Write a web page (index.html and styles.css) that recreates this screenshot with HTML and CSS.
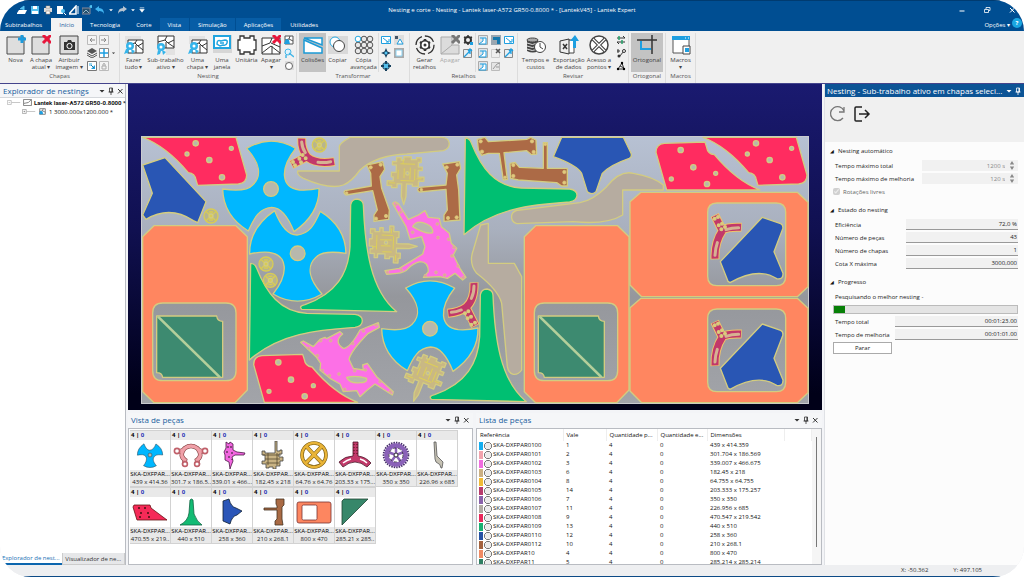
FILE: index.html
```html
<!DOCTYPE html>
<html lang="pt">
<head>
<meta charset="utf-8">
<title>Nesting e corte - Lantek Expert</title>
<link rel="stylesheet" href="styles.css">
</head>
<body>
<svg class="defs" aria-hidden="true">
  <defs>
    <linearGradient id="steel" x1="0" y1="0" x2="0" y2="1"><stop offset="0" stop-color="#b7c1d3"/><stop offset=".35" stop-color="#a9b0be"/><stop offset=".6" stop-color="#95979c"/><stop offset="1" stop-color="#a2a4a9"/></linearGradient>
    <g id="fan"><path d="M-73-122Q0-165 74-122C25-60 30-5 85 3Q115 5 144-2Q146 75 69 128C50 80 30 55 2 55C-35 58-50 85-68 126Q-143 80-145 0C-110 5-70 5-55-12C-25-40-35-80-73-122Z"/><circle class="hole" r="22"/></g>
    <path id="horn" d="M662 225Q665 207 682 207Q699 210 700 225C705 350 720 480 800 545L515 538Q505 528 525 524C620 490 655 430 660 350Z"/>
    <path id="hornside" d="M362 400Q375 400 380 415C410 490 450 545 530 550L675 553Q697 556 697 572Q697 588 675 592C560 600 450 610 358 690Z"/>
    <g id="redplate"><path d="M38 22H318L350 135Q350 160 325 162L203 166L198 150Q195 130 175 128Q110 50 38 22Z"/><g class="hole"><circle cx="197" cy="40" r="8"/><circle cx="238" cy="90" r="8"/><circle cx="276" cy="142" r="8"/><circle cx="171" cy="72" r="6"/><circle cx="304" cy="55" r="6"/></g></g>
    <g id="cornerframe"><path class="orange" fill-rule="evenodd" d="M72 287H318L352 320V780L315 818H72L38 785V320ZM98 519Q68 519 68 549V722Q68 752 98 752H288Q318 752 318 722V549Q318 519 288 519Z"/><path class="teal" d="M80 558H260Q262 574 278 574V742H98Q96 728 80 728Z"/><path class="slit" d="M84 560L270 742"/></g>
    <path id="wideframe" fill-rule="evenodd" d="M90 215L123 187H592L624 217V470L592 500H125L90 465ZM351 219Q323 219 323 247V439Q323 467 351 467H529Q557 467 557 439V247Q557 219 529 219Z"/>
    <path id="arrowplate" d="M361 395L487 262L542 281Q551 285 548 297L522 365L549 430Q550 450 530 446Q475 410 390 458L384 454Z"/>
    <g id="wye"><path class="wye-edge" d="M344 255L367 302M366 300Q385 290 425 292M367 302C348 330 344 355 345 388"/><path class="wye-body" d="M345 257L367 302M366 300Q385 290 423 292M367 302C348 330 344 355 345 386"/><path class="wye-slot" d="M378 299Q395 293 416 293M352 338Q346 355 345 376"/><g fill="#f4c66c"><circle cx="344" cy="266" r="4"/><circle cx="354" cy="261" r="4"/><circle cx="356" cy="286" r="4"/><circle cx="366" cy="281" r="4"/><circle cx="364" cy="298" r="4"/><circle cx="375" cy="291" r="4"/></g></g>
    <g id="wheel"><circle r="21" fill="#b8b58c" stroke="#d8cc55" stroke-width="4"/><path d="M-14-13Q0 6 14-13M-14 14Q0-5 14 14M-6-12H6M-6 12H6" fill="none" stroke="#d8cc55" stroke-width="4"/><circle r="6" fill="#d8cc55"/></g>
    <g id="jig"><path d="M-32-57H-18V-49H-10V-60H12V-52H28V-58H42V-44H34V-30H46V-20H34V0H52V12H36V28H18V22H0V60L-6 84L-14 60V22H-28V34H-44V28H-58V14H-40V2H-46V-12H-32V-34H-44V-44H-32Z"/><path class="jigline" d="M-20-38H24M-26-20V8M24-24V10M-18 12H22M-12-40V-52M-8-25V4M10-28V8M-52 20H-34M30 5H45"/><circle class="hole" cx="2" cy="-10" r="5"/></g>
    <g id="bracket"><path d="M248 102L298 95L302 115L290 135L296 180L300 270L252 274V255L262 240L258 178L178 186Q168 180 178 172L258 165L262 130Z"/><g class="bolt"><circle cx="260" cy="112" r="5"/><circle cx="292" cy="104" r="5"/><circle cx="264" cy="264" r="5"/><circle cx="290" cy="262" r="5"/><circle cx="184" cy="179" r="4"/></g></g>

    <symbol id="i-plus" viewBox="0 0 20 20"><path d="M1 2h17v17H1z" fill="#dedede" stroke="#4a4a4a"/><path d="M16 0v8M12 4h8" stroke="#1e9bdc" stroke-width="3"/></symbol>
    <symbol id="i-del" viewBox="0 0 20 20"><path d="M1 2h17v17H1z" fill="#dedede" stroke="#4a4a4a"/><path d="M12 0l8 8M20 0l-8 8" stroke="#e8173c" stroke-width="3"/></symbol>
    <symbol id="i-cam" viewBox="0 0 20 20"><path d="M1 1h18v18H1z" fill="#dcdcdc" stroke="#444"/><path d="M5 7h3l1-2h3l1 2h3v8H5z" fill="#333"/><circle cx="10.500" cy="11" r="2.600" fill="#333" stroke="#fff"/></symbol>
    <symbol id="i-nest" viewBox="0 0 20 20"><path d="M1 1h16v8H1z" fill="#e2e2e2"/><path d="M4 5h15v13H4z" fill="#fff" stroke="#333"/><path d="M4 10l7-2 2-3M11 8l3 3 5-3M12 10v8M14 11l5 4" fill="none" stroke="#333"/><circle cx="6" cy="11" r="4" fill="#35b4ea"/><path d="M2 14l-2 5 3-1 1 1 1-5M7 14l1 5 3-3" fill="#35b4ea"/><circle cx="6" cy="11" r="1.500" fill="#fff"/></symbol>
    <symbol id="i-subnest" viewBox="0 0 20 20"><path d="M10 11h9v9h-9z" fill="#e2e2e2"/><path d="M2 1h16v12H2z" fill="#fff" stroke="#333"/><path d="M2 7l7-2 2-4M9 5l3 3 6-3M10 7v6M12 8l6 4" fill="none" stroke="#333"/><circle cx="5" cy="12" r="4" fill="#35b4ea"/><path d="M2 15l-1 5 3-1 1-3M6 15l1 5 3-3" fill="#35b4ea"/><circle cx="5" cy="12" r="1.500" fill="#fff"/></symbol>
    <symbol id="i-window" viewBox="0 0 20 20"><path d="M1 0h19v18H1z" fill="#d6d6d6"/><path d="M2 1h16v12H2z" fill="#fff" stroke="#21a5df" stroke-width="2"/><path d="M5 9q0-5 4-3l4-1q3 0 2 3t-4 2l-3 1zM8 8h4" fill="none" stroke="#21a5df" stroke-width="1.500"/></symbol>
    <symbol id="i-unit" viewBox="0 0 20 20"><path d="M3 1h4v2h6V1h4v4h2v10h-2v4h-4v-2H7v2H3v-4H1V5h2z" fill="#fff" stroke="#333" stroke-width="1.300"/></symbol>
    <symbol id="i-nestdel" viewBox="0 0 20 20"><path d="M1 3h18v16H1z" fill="#fff" stroke="#333"/><path d="M1 11l8-3 2-5M1 18l9-7 9 7M11 11v8M10 8l9 4" fill="none" stroke="#333"/><path d="M12 0l8 8M20 0l-8 8" stroke="#e8173c" stroke-width="3"/></symbol>
    <symbol id="i-coll" viewBox="0 0 20 20"><path d="M1 3h18v7zM1 5l18 8v5H1z" fill="#fff" stroke="#1b9ad6" stroke-width="1.500"/></symbol>
    <symbol id="i-copy" viewBox="0 0 20 20"><path d="M0 1h20v18H0z" fill="#d9d9d9"/><circle cx="7" cy="7" r="5" fill="#fff" stroke="#27a8df"/><circle cx="11" cy="11" r="5.500" fill="#fff" stroke="#444"/></symbol>
    <symbol id="i-grid9" viewBox="0 0 20 20"><g fill="#e8e8e8" stroke="#555"><circle cx="4" cy="10" r="2.800"/><circle cx="10" cy="10" r="2.800"/><circle cx="16" cy="10" r="2.800"/><circle cx="10" cy="4" r="2.800"/><circle cx="16" cy="4" r="2.800"/><circle cx="4" cy="16" r="2.800"/><circle cx="10" cy="16" r="2.800"/><circle cx="16" cy="16" r="2.800"/></g><circle cx="4" cy="4" r="2.800" fill="#fff" stroke="#27a8df"/></symbol>
    <symbol id="i-gear" viewBox="0 0 20 20"><circle cx="10" cy="10" r="9" fill="none" stroke="#333" stroke-width="1.300" stroke-dasharray="11 3"/><circle cx="10" cy="10" r="5" fill="#333"/><path d="M10 4v12M5 7l10 6M15 7l-10 6" stroke="#333" stroke-width="2.500"/><circle cx="10" cy="10" r="3.400" fill="#fff"/><circle cx="10" cy="10" r="1.500" fill="#333"/></symbol>
    <symbol id="i-scrapdel" viewBox="0 0 20 20"><path d="M1 2h11v8h7v9H1z" fill="#dcdcdc" stroke="#aaa"/><path d="M1 19l11-9" stroke="#aaa"/><path d="M12 0l8 8M20 0l-8 8" stroke="#777" stroke-width="3"/></symbol>
    <symbol id="i-coins" viewBox="0 0 20 20"><path d="M1 5v11q6 3 11 0V5" fill="#444"/><ellipse cx="6.500" cy="5" rx="5.500" ry="2" fill="#aaa" stroke="#444"/><path d="M1 8q5 3 11 0M1 11q5 3 11 0M1 14q5 3 11 0" fill="none" stroke="#ddd"/><circle cx="14" cy="12" r="5.500" fill="#fff" stroke="#444"/><path d="M14 8v4l3 2" fill="none" stroke="#444"/></symbol>
    <symbol id="i-export" viewBox="0 0 20 20"><path d="M9 5h6v13H9z" fill="#fff" stroke="#444"/><path d="M1 6l9-2v15l-9-2z" fill="#eee" stroke="#333"/><path d="M4 9l4 5M8 9l-4 5" stroke="#333" stroke-width="1.500"/><path d="M14 13V6h-3l5-6 4 6h-3v7z" fill="#1e9fe0"/></symbol>
    <symbol id="i-access" viewBox="0 0 20 20"><circle cx="10" cy="10" r="9" fill="#fff" stroke="#444" stroke-width="1.500"/><path d="M4 4q6 6 12 12M16 4Q10 10 4 16" stroke="#444" stroke-width="3.500"/><path d="M4 4q6 6 12 12M16 4Q10 10 4 16" stroke="#fff" stroke-width="1.200"/></symbol>
    <symbol id="i-ortho" viewBox="0 0 20 20"><path d="M0 5h20M15 0v19" stroke="#333" stroke-width="1.500"/><path d="M4 6v8h10" fill="none" stroke="#1e9fe0" stroke-width="2"/></symbol>
    <symbol id="i-macro" viewBox="0 0 20 20"><path d="M2 2h16v16H2z" fill="#fff" stroke="#555"/><path d="M1 1h18v4H1z" fill="#1e9fe0"/><path d="M14 3h1M17 3h1" stroke="#fff"/><path d="M12 11h7v8h-7z" fill="#fff" stroke="#444"/><path d="M14 13h4v4h-4z" fill="#1e9fe0"/></symbol>

    <symbol id="s-left" viewBox="0 0 10 10"><path d="M.5.5h9v9h-9z" fill="#f4f4f4" stroke="#bbb"/><path d="M8 5H3M5 3L3 5l2 2" fill="none" stroke="#888"/></symbol>
    <symbol id="s-right" viewBox="0 0 10 10"><path d="M.5.5h9v9h-9z" fill="#f4f4f4" stroke="#bbb"/><path d="M2 5h5M5 3l2 2-2 2" fill="none" stroke="#888"/></symbol>
    <symbol id="s-layers" viewBox="0 0 10 10"><path d="M0 3l5-3 5 3-5 3z" fill="#555"/><path d="M0 5l5 3 5-3M0 7l5 3 5-3" fill="none" stroke="#555"/></symbol>
    <symbol id="s-move" viewBox="0 0 10 10"><path d="M.5.5h9v9h-9z" fill="#fff" stroke="#888"/><path d="M5 1v8M1 5h8" stroke="#1e9fe0" stroke-width="1.500"/></symbol>
    <symbol id="s-pick" viewBox="0 0 10 10"><path d="M.5.5h9v9h-9z" fill="#fff" stroke="#777"/><path d="M2 2h3v3H2z" fill="#9ad5f0"/><path d="M8 4v4H4z" fill="#1e9fe0"/><path d="M4 4l3 3" stroke="#157bb0"/></symbol>
    <symbol id="s-lock" viewBox="0 0 10 10"><path d="M.5.5h9v9h-9z" fill="#f4f4f4" stroke="#bbb"/><path d="M3 5h4v3H3zM4 5V3q1-1 2 0v2" fill="none" stroke="#aaa"/></symbol>
    <symbol id="s-nest" viewBox="0 0 10 10"><path d="M1 1h8v8H1z" fill="#fff" stroke="#555"/><path d="M1 5l4-1 1-3M5 4l4 2" fill="none" stroke="#555"/><path d="M0 9l2-5 3 1 1 4z" fill="#1e9fe0"/></symbol>
    <symbol id="s-star" viewBox="0 0 10 10"><circle cx="4" cy="4" r="3" fill="#dff3fd" stroke="#45b7e8"/><path d="M5 5l5 4M2 7v3" stroke="#45b7e8" stroke-width="1.500"/></symbol>
    <symbol id="s-circ" viewBox="0 0 10 10"><path d="M1 0h9v9H1z" fill="#ddd"/><circle cx="5" cy="5" r="3.500" fill="#fff" stroke="#666"/></symbol>
    <symbol id="s-rot" viewBox="0 0 10 10"><path d="M.5 1.500h9v7h-9z" fill="#fff" stroke="#1e9fe0"/><path d="M2 3l5 4M5 7h3V4" fill="none" stroke="#1e9fe0"/></symbol>
    <symbol id="s-shapes" viewBox="0 0 10 10"><path d="M0 0h10v10H0z" fill="#ddd"/><path d="M1 1h3v3H1z" fill="#456"/><path d="M3 9l3-5 3 5z" fill="#fff" stroke="#1e9fe0"/></symbol>
    <symbol id="s-cross" viewBox="0 0 10 10"><path d="M5 0l1.500 3.500L10 5 6.500 6.500 5 10 3.500 6.500 0 5l3.500-1.500z" fill="#17405d"/><circle cx="5" cy="5" r="1.500" fill="#56c5f3"/></symbol>
    <symbol id="s-box" viewBox="0 0 10 10"><path d="M0 0h10v10H0z" fill="#aaa"/><path d="M2 2h6v6H2z" fill="#fff" stroke="#8bd0ef"/></symbol>
    <symbol id="s-target" viewBox="0 0 10 10"><circle cx="5" cy="5" r="3.500" fill="#53bde9" stroke="#26495c"/><path d="M5 0v3M5 7v3M0 5h3M7 5h3" stroke="#17405d" stroke-width="2"/></symbol>
    <symbol id="s-gear" viewBox="0 0 10 10"><circle cx="5" cy="5" r="3" fill="none" stroke="#333" stroke-width="2"/><path d="M5 0v2M5 8v2M1 2l2 1M9 2L7 3M1 8l2-1" stroke="#333" stroke-width="1.500"/><path d="M7 7h3v3H7z" fill="#1e9fe0"/></symbol>
    <symbol id="s-scrap" viewBox="0 0 10 10"><path d="M.5.500h9v9h-9z" fill="#dfe4e8" stroke="#aaa"/><path d="M1 9l4-3V3h3v6z" fill="#fff" stroke="#1e9fe0"/><path d="M2 3h3" stroke="#1e9fe0"/></symbol>
    <symbol id="s-dark" viewBox="0 0 10 10"><path d="M0 0h10v10H0z" fill="#9aa6b0"/><path d="M2 2h7v7H6V5H2z" fill="#1577ad"/></symbol>
    <symbol id="s-up" viewBox="0 0 10 10"><path d="M.5 1.500h8v8h-8z" fill="#e7eef2" stroke="#888"/><path d="M1 9l6-6M7 6V1M5 3l2-2 2 2" fill="none" stroke="#1e9fe0" stroke-width="1.300"/></symbol>
    <symbol id="s-greyx" viewBox="0 0 10 10"><path d="M.5 1.500h8v8h-8z" fill="#eee" stroke="#ccc"/><path d="M5 1l4 4M9 1L5 5" stroke="#555" stroke-width="1.500"/></symbol>
    <symbol id="s-grey" viewBox="0 0 10 10"><path d="M.5 1.500h8v8h-8z" fill="#e5e5e5" stroke="#bbb"/><path d="M2 8l4-5 3-1M5 6h3" stroke="#999" fill="none"/></symbol>
    <symbol id="s-order" viewBox="0 0 10 10"><path d="M1 3h8M7 1l2 2M1 7h8M3 9L1 7" stroke="#333" fill="none"/><path d="M3 1v4M6 5v4" stroke="#26a36b" stroke-width="1.500"/></symbol>
    <symbol id="s-path" viewBox="0 0 10 10"><path d="M1 3h3M2 1v4M3 9l5-6" stroke="#333" fill="none"/><circle cx="3" cy="8" r="1.500" fill="#333"/><circle cx="8" cy="3" r="1.500" fill="#fff" stroke="#333"/></symbol>
    <symbol id="s-tri" viewBox="0 0 10 10"><path d="M2 8l4-6 2 6zM4 5l4 2" stroke="#333" fill="none"/><circle cx="2" cy="8" r="1.200"/><circle cx="6" cy="2" r="1.200"/><circle cx="8" cy="8" r="1.200"/></symbol>

    <symbol id="w-pin" viewBox="0 0 8 8"><path d="M2.500 1h3v4h-3zM1.500 5h5M4 5v3" fill="none" stroke="currentColor" stroke-width=".8"/><path d="M4.500 1h1v4h-1z" fill="currentColor"/></symbol>
    <symbol id="w-down" viewBox="0 0 8 8"><path d="M1.500 3h5L4 5.500z" fill="currentColor"/></symbol>
    <symbol id="w-x" viewBox="0 0 8 8"><path d="M2 2l4.500 4.500M6.500 2L2 6.500" stroke="currentColor"/></symbol>
    <symbol id="r-part" viewBox="0 0 8 8"><path d="M2.500.500h3l2 2v3l-2 2h-3l-2-2v-3z" fill="#ececec" stroke="#555" stroke-width=".8"/></symbol>
  </defs>
</svg>

<div class="app">
  <header class="titlebar">
    <nav class="quick" aria-label="Acesso rápido">
      <button aria-label="Abrir"><svg viewBox="0 0 10 10"><path d="M0 8l2-3h8L8 9H0z" fill="#fff"/><path d="M3 4l4-3v4" stroke="#54c2f0" fill="#54c2f0"/></svg></button>
      <button aria-label="Salvar"><svg viewBox="0 0 10 10"><path d="M1 1h8v8H1z" fill="#54c2f0"/><path d="M3 1h4v3H3zM2 6h6v3H2z" fill="#fff"/></svg></button>
      <button aria-label="Imprimir"><svg viewBox="0 0 10 10"><path d="M1 3h8v4H1z" fill="#ddd"/><path d="M3 1h4v2H3zM3 6h4v3H3z" fill="#fff" stroke="#987" stroke-width=".6"/></svg></button>
      <button aria-label="Visualizar"><svg viewBox="0 0 10 10"><path d="M1 1h6v8H1z" fill="#fff"/><circle cx="7" cy="6" r="2" fill="#54c2f0"/><path d="M8 8l2 2" stroke="#fff"/></svg></button>
      <button aria-label="Desenho"><svg viewBox="0 0 10 10"><path d="M0 9l7-8v8z" fill="none" stroke="#fff" stroke-width="1.500"/><path d="M9 1v8" stroke="#fff"/></svg></button>
      <button aria-label="Nesting"><svg viewBox="0 0 10 10"><path d="M0 3h8v6H0z" fill="#24506f" stroke="#889"/><path d="M1 8l3-3 3 3" stroke="#9bc" fill="none"/><circle cx="9" cy="1.500" r="1.500" fill="#54c2f0"/></svg></button>
      <button aria-label="Desfazer"><svg viewBox="0 0 10 10"><path d="M0 4l4-3v2q5 0 5 6Q8 6 4 6v1z" fill="#41b4f0"/></svg></button>
      <svg class="tiny"><use href="#w-down"/></svg>
      <button aria-label="Refazer"><svg viewBox="0 0 10 10"><path d="M10 4L6 1v2Q1 3 1 9q1-3 5-3v1z" fill="#b8c4d0"/></svg></button>
      <svg class="tiny"><use href="#w-down"/></svg>
      <svg class="tiny" viewBox="0 0 8 8"><path d="M1 1h6M1 3h6L4 7z" fill="#fff" stroke="#fff" stroke-width=".8"/></svg>
    </nav>
    <h1>Nesting e corte - Nesting - Lantek laser-A572 GR50-0.8000 * - [LantekV45] - Lantek Expert</h1>
    <div class="winbtns">
      <button aria-label="Minimizar"><svg viewBox="0 0 8 8"><path d="M1.500 5h5" stroke="#fff" stroke-width="1.200"/></svg></button>
      <button aria-label="Restaurar"><svg viewBox="0 0 8 8"><path d="M1.500 3.500h4v3h-4zM3 3V1.500h4v3H6" stroke="#fff" stroke-width=".8" fill="none"/></svg></button>
      <button aria-label="Fechar"><svg class="white"><use href="#w-x"/></svg></button>
    </div>
  </header>

  <nav class="tabs">
    <button>Subtrabalhos</button><button class="active">Início</button><button>Tecnologia</button><button>Corte</button><button class="ctx">Vista</button><button class="ctx">Simulação</button><button class="ctx">Aplicações</button><button>Utilidades</button>
    <button class="options">Opções ▾</button><button class="help" aria-label="Ajuda">?</button>
  </nav>

  <section class="ribbon">
    <div class="group"><div class="tools t-chapas">
      <button class="tool"><svg><use href="#i-plus"/></svg>Nova</button>
      <button class="tool"><svg><use href="#i-del"/></svg>A chapa atual ▾</button>
      <button class="tool"><svg><use href="#i-cam"/></svg>Atribuir imagem ▾</button>
      <div class="small two"><svg><use href="#s-left"/></svg><svg><use href="#s-right"/></svg><svg><use href="#s-layers"/></svg><svg><use href="#s-move"/></svg><svg class="caret"><use href="#w-down"/></svg><svg><use href="#s-pick"/></svg><svg><use href="#s-lock"/></svg></div>
    </div><span class="caption">Chapas</span></div>

    <div class="group"><div class="tools t-nesting">
      <button class="tool"><svg><use href="#i-nest"/></svg>Fazer tudo ▾</button>
      <button class="tool"><svg><use href="#i-subnest"/></svg>Sub-trabalho ativo ▾</button>
      <button class="tool"><svg><use href="#i-nest"/></svg>Uma chapa ▾</button>
      <button class="tool"><svg><use href="#i-window"/></svg>Uma janela</button>
      <button class="tool"><svg><use href="#i-unit"/></svg>Unitária</button>
      <button class="tool"><svg><use href="#i-nestdel"/></svg>Apagar<br>▾</button>
      <div class="small"><svg><use href="#s-nest"/></svg><svg><use href="#s-star"/></svg><svg><use href="#s-circ"/></svg></div>
    </div><span class="caption">Nesting</span></div>

    <div class="group"><div class="tools t-transf">
      <button class="tool pressed"><svg><use href="#i-coll"/></svg>Colisões</button>
      <button class="tool"><svg><use href="#i-copy"/></svg>Copiar</button>
      <button class="tool"><svg><use href="#i-grid9"/></svg>Cópia avançada</button>
      <div class="small two ruled"><svg><use href="#s-rot"/></svg><svg><use href="#s-shapes"/></svg><svg><use href="#s-cross"/></svg><svg><use href="#s-box"/></svg><svg><use href="#s-target"/></svg></div>
    </div><span class="caption">Transformar</span></div>

    <div class="group"><div class="tools t-ret">
      <button class="tool"><svg><use href="#i-gear"/></svg>Gerar retalhos</button>
      <button class="tool off"><svg><use href="#i-scrapdel"/></svg>Apagar</button>
      <div class="small"><svg><use href="#s-gear"/></svg><svg><use href="#s-up"/></svg></div>
      <div class="small three ruled"><svg><use href="#s-scrap"/></svg><svg><use href="#s-dark"/></svg><svg><use href="#s-rot"/></svg><svg><use href="#s-scrap"/></svg><svg><use href="#s-greyx"/></svg><svg><use href="#s-up"/></svg><svg><use href="#s-scrap"/></svg><svg><use href="#s-grey"/></svg></div>
    </div><span class="caption">Retalhos</span></div>

    <div class="group"><div class="tools t-rev">
      <button class="tool"><svg><use href="#i-coins"/></svg>Tempos e custos</button>
      <button class="tool"><svg><use href="#i-export"/></svg>Exportação de dados</button>
      <button class="tool"><svg><use href="#i-access"/></svg>Acesso a pontos ▾</button>
      <div class="small"><svg><use href="#s-order"/></svg><svg><use href="#s-path"/></svg><svg><use href="#s-tri"/></svg></div>
    </div><span class="caption">Revisar</span></div>

    <div class="group"><div class="tools t-one"><button class="tool pressed"><svg><use href="#i-ortho"/></svg>Ortogonal</button></div><span class="caption">Ortogonal</span></div>
    <div class="group"><div class="tools t-mac"><button class="tool"><svg><use href="#i-macro"/></svg>Macros<br>▾</button></div><span class="caption">Macros</span></div>
  </section>

  <main class="work">
    <aside class="explorer">
      <div class="panelhead"><h2>Explorador de nestings</h2><svg><use href="#w-down"/></svg><svg><use href="#w-pin"/></svg><svg><use href="#w-x"/></svg></div>
      <div class="tree">
        <div class="node root"><svg class="exp" viewBox="0 0 18 8"><path d="M.5 1.500h5v5h-5zM2 4h2" fill="#fff" stroke="#999" stroke-width=".7"/><path d="M6 4h11" stroke="#999" stroke-width=".7"/></svg><svg class="nico" viewBox="0 0 10 8"><path d="M.5.500h9v7h-9zM1 5l5-1 3-3" fill="#fff" stroke="#555" stroke-width=".8"/></svg><b>Lantek laser-A572 GR50-0.8000 *</b></div>
        <div class="node child"><svg class="exp" viewBox="0 0 18 8"><path d="M.5 1.500h5v5h-5zM2 4h2M3 3v2" fill="#fff" stroke="#777" stroke-width=".7"/><path d="M6 4h11" stroke="#999" stroke-width=".7"/></svg><svg class="nico"><use href="#s-nest"/></svg><span>1 3000.000x1200.000 *</span></div>
      </div>
      <div class="sidetabs"><button class="on">Explorador de nest...</button><button>Visualizador de ne...</button></div>
    </aside>

    <section class="center">
      <div class="canvas">
        <svg viewBox="128 84 694 326" role="img" aria-label="Chapa com peças encaixadas">
          <rect x="141.500" y="136.500" width="667" height="267" fill="url(#steel)" stroke="#c9cbd0"/>
          <g class="parts" transform="translate(130 130) scale(.33333)">
            <path class="stone" d="M720 22H660Q628 40 628 50V123H503Q500 135 520 145Q600 180 640 165Q665 155 690 120Q740 75 830 72L940 62Q958 57 958 40Q955 22 935 22Z"/>
            <use href="#redplate" class="red"/>
            <use href="#redplate" class="red" transform="translate(721 839) rotate(180)"/>
            <path class="blue" d="M38 105L105 83L228 215L203 278L190 272Q120 225 48 268L38 255L67 190Z"/>
            <use href="#cornerframe"/>
            <use href="#cornerframe" transform="translate(1145)"/>
            <use href="#fan" class="cyan" transform="translate(423 177)"/>
            <use href="#fan" class="cyan" transform="translate(503 370) rotate(180)"/>
            <use href="#fan" class="cyan" transform="translate(900 596)"/>
            <use href="#hornside" class="green"/>
            <use href="#hornside" class="green" transform="translate(644 -376)"/>
            <use href="#horn" class="green"/>
            <use href="#horn" class="green" transform="translate(389 270)"/>
            <use href="#wheel" transform="translate(568 45)"/><use href="#wheel" transform="translate(243 258)"/><use href="#wheel" transform="translate(408 402)"/><use href="#wheel" transform="translate(421 451)"/>
            <g><path class="wye-edge" d="M515 24Q514 60 532 82Q560 104 614 95M532 80L484 104"/><path class="wye-body" d="M515 26Q514 60 532 82Q560 104 612 95M532 80L486 103"/><path class="wye-slot" d="M515 36Q517 56 526 68M564 97Q585 99 602 95"/><g fill="#f4c66c"><circle cx="489" cy="96" r="4"/><circle cx="495" cy="106" r="4"/><circle cx="508" cy="86" r="4"/><circle cx="513" cy="97" r="4"/><circle cx="518" cy="75" r="4"/><circle cx="527" cy="85" r="4"/></g></g>
            <path class="pink" d="M512 637L520 633L550 650L570 628L585 622L590 626L630 605L638 612Q610 635 640 655Q660 655 690 600L745 578L748 592L715 610Q665 660 657 688L670 715L700 720L698 705L712 700L740 740L790 785L787 795L735 762L712 780L690 800L680 782L640 785L630 762L600 745L570 720L572 700L558 680Z"/>
            <path class="hole" d="M650 742Q680 735 710 745Q712 758 690 758Q660 762 650 742Z"/>
            <g class="dots"><circle cx="536" cy="655" r="4"/><circle cx="572" cy="632" r="4"/><circle cx="602" cy="632" r="4"/><circle cx="562" cy="677" r="4"/><circle cx="577" cy="722" r="4"/><circle cx="598" cy="737" r="4"/><circle cx="627" cy="732" r="4"/><circle cx="644" cy="778" r="4"/><circle cx="668" cy="640" r="4"/><circle cx="700" cy="603" r="4"/><circle cx="674" cy="722" r="4"/><circle cx="706" cy="720" r="4"/><circle cx="750" cy="755" r="4"/><circle cx="781" cy="785" r="4"/><circle cx="738" cy="585" r="4"/></g>
          </g>
          <g class="parts" transform="translate(360 130) scale(.33333)">
            <path class="stone" d="M455 255Q460 240 480 240L660 218Q700 210 740 170Q780 120 820 130Q880 140 910 165V180H788V255Q740 285 640 275L470 281Q452 275 455 255Z"/>
            <path class="stone" d="M385 280V400H463L485 440V720Q475 735 460 733Q445 730 442 710L425 520Q415 480 350 430Q325 400 340 360L362 285Z"/>
            <path class="blue" d="M605 22L580 80Q650 105 665 130L682 185Q697 197 708 185L727 130Q750 105 808 85Q817 80 813 70L790 22Z"/>
            <use href="#bracket" class="brown"/>
            <path class="brown" d="M20 105L68 95L74 118L60 140L65 175L88 240L86 268L42 274V255L52 240L38 182L-42 195Q-52 188-45 182L34 168L32 130Z"/>
            <path class="brown" d="M352 28L375 22L385 35L500 28L512 22L528 30L530 72L515 74L500 62L432 68L442 148L430 150L418 70L385 70L365 76L355 60Z"/>
            <path class="brown" d="M450 100L465 97L478 112L550 115V38H562V115H622V168H605L590 158L475 150L452 145Z"/>
            <g class="bolt"><circle cx="32" cy="112" r="5"/><circle cx="62" cy="104" r="5"/><circle cx="48" cy="266" r="5"/><circle cx="78" cy="258" r="5"/><circle cx="-40" cy="189" r="4"/><circle cx="362" cy="34" r="5"/><circle cx="366" cy="65" r="5"/><circle cx="516" cy="34" r="5"/><circle cx="521" cy="66" r="5"/><circle cx="435" cy="142" r="4"/><circle cx="556" cy="43" r="4"/><circle cx="460" cy="105" r="5"/><circle cx="460" cy="138" r="5"/><circle cx="613" cy="126" r="5"/><circle cx="613" cy="158" r="5"/></g>
            <use href="#jig" class="tan" transform="translate(140 140) rotate(2)"/>
            <use href="#jig" class="tan" transform="translate(88 340) rotate(-88)"/>
            <use href="#jig" class="tan" transform="translate(198 738) rotate(22)"/>
            <path class="pink" d="M98 220Q105 210 116 222L145 268L175 255L195 242L205 262L238 265L244 290L268 310L274 340L290 355L280 375L300 415L318 442L308 450L285 430L262 445L240 440L190 442L205 425Q205 395 180 395Q160 400 145 415Q135 428 110 430L80 433L75 422L118 415L188 372L195 350L185 320L150 328L138 290Z"/>
            <path class="hole" d="M158 290Q170 268 200 282Q220 290 218 308Q200 315 158 290Z"/>
            <g class="dots"><circle cx="108" cy="224" r="4"/><circle cx="122" cy="246" r="4"/><circle cx="158" cy="307" r="4"/><circle cx="232" cy="282" r="4"/><circle cx="234" cy="323" r="4"/><circle cx="266" cy="328" r="4"/><circle cx="282" cy="352" r="4"/><circle cx="276" cy="378" r="4"/><circle cx="294" cy="408" r="4"/><circle cx="310" cy="443" r="4"/><circle cx="228" cy="427" r="4"/><circle cx="196" cy="437" r="4"/><circle cx="82" cy="427" r="4"/><circle cx="124" cy="420" r="4"/><circle cx="254" cy="435" r="4"/></g>
            <g><path class="wye-edge" d="M342 457Q344 510 318 532Q300 546 263 550M318 532L346 588"/><path class="wye-body" d="M342 459Q344 510 318 532Q300 546 265 550M318 532L345 586"/><path class="wye-slot" d="M342 468Q342 490 334 505M304 540Q288 547 274 547"/><g fill="#f4c66c"><circle cx="315" cy="550" r="4"/><circle cx="325" cy="544" r="4"/><circle cx="323" cy="565" r="4"/><circle cx="333" cy="560" r="4"/><circle cx="334" cy="584" r="4"/><circle cx="345" cy="578" r="4"/></g></g>
          </g>
          <g class="parts" transform="translate(600 130) scale(.33333)">
            <use href="#redplate" class="red" transform="translate(271)"/>
            <use href="#redplate" class="red" transform="translate(518 202) rotate(180)"/>
            <use href="#wideframe" class="orange"/><use href="#wideframe" class="orange" transform="translate(0 318)"/>
            <use href="#arrowplate" class="blue"/><use href="#arrowplate" class="blue" transform="translate(0 320)"/>
            <use href="#wye"/><use href="#wye" transform="translate(0 320)"/>
          </g>
        </svg>
      </div>

      <div class="bottom">
        <section class="pane">
          <div class="panelhead"><h2>Vista de peças</h2><svg><use href="#w-down"/></svg><svg><use href="#w-pin"/></svg><svg><use href="#w-x"/></svg></div>
          <div class="cards">
            <article class="card"><p><b>4 | <i>0</i></b></p><svg class="cyan" viewBox="-160 -160 320 320"><use href="#fan" transform="rotate(180)"/></svg><strong>SKA-DXFPAR...</strong><span>439 x 414.36</span></article>
            <article class="card"><p><b>4 | <i>0</i></b></p><svg viewBox="0 0 36 28"><g fill="none" stroke-linecap="round"><path d="M5 10Q9 11 12 7Q18 3 24 7Q27 11 31 10M11 8Q6 15 12 19L11 23M25 8Q30 15 24 19L25 23" stroke="#733" stroke-width="4.500"/><path d="M5 10Q9 11 12 7Q18 3 24 7Q27 11 31 10M11 8Q6 15 12 19L11 23M25 8Q30 15 24 19L25 23" stroke="#f0a0a8" stroke-width="3.300"/></g><g fill="#fff" stroke="#c0606a" stroke-width="1.600"><circle cx="4" cy="10" r="2.600"/><circle cx="32" cy="10" r="2.600"/><circle cx="12" cy="23" r="2.400"/><circle cx="24" cy="23" r="2.400"/></g></svg><strong>SKA-DXFPAR...</strong><span>301.7 x 186.5..</span></article>
            <article class="card"><p><b>4 | <i>0</i></b></p><svg viewBox="0 0 36 28"><path d="M12 1l3 2 1-2 3 2v6l4 2 8 1-1 2-9 0-3 2 1 4-2 5-1 3-1-7-4-2v-5l-1-3 2-4z" fill="#f266e0" stroke="#4a1645" stroke-width=".8"/><path d="M14 5v2M17 5v2M13 10v2M18 11v2M15 15v2M18 18v1" stroke="#222"/></svg><strong>SKA-DXFPAR...</strong><span>339.01 x 466...</span></article>
            <article class="card"><p><b>4 | <i>0</i></b></p><svg viewBox="0 0 36 28"><path d="M20 0h2v10h3v-1h2v4h-3v3h4v4h-3v5h-4v3h-3v-2h-4v1h-3v-4H7v-3h3v-6H7v-4h3v2h10z" fill="#c9b383" stroke="#444" stroke-width=".8"/><path d="M8 14h18M10 18h15M13 12v12M22 12v12M11 22h13" stroke="#554a30" stroke-width=".8"/></svg><strong>SKA-DXFPAR...</strong><span>182.45 x 218</span></article>
            <article class="card"><p><b>4 | <i>0</i></b></p><svg viewBox="0 0 36 28"><circle cx="18" cy="14" r="12" fill="#fff" stroke="#7a5c11" stroke-width="3.600"/><path d="M10 5q8 9 17 18M26 5q-8 9-17 18" stroke="#7a5c11" stroke-width="4" fill="none"/><circle cx="18" cy="14" r="12" fill="none" stroke="#e9b437" stroke-width="2.400"/><path d="M10 5q8 9 17 18M26 5q-8 9-17 18" stroke="#e9b437" stroke-width="2.800" fill="none"/></svg><strong>SKA-DXFPAR...</strong><span>64.76 x 64.76</span></article>
            <article class="card"><p><b>4 | <i>0</i></b></p><svg viewBox="0 0 36 28"><path d="M16 1h5v14q8 1 13 7l-4 4q-6-5-12-5T6 26l-4-5q6-6 14-6z" fill="#c23a6a" stroke="#4d1529" stroke-width=".8"/><path d="M6 22q4-3 8-4M23 18q4 1 7 4" fill="none" stroke="#fff" stroke-width="1.500"/><path d="M17 3v12M20 3v12" stroke="#411" stroke-dasharray="1 2"/></svg><strong>SKA-DXFPAR...</strong><span>203.33 x 175...</span></article>
            <article class="card"><p><b>4 | <i>0</i></b></p><svg viewBox="0 0 36 28"><circle cx="18" cy="14" r="12.300" fill="none" stroke="#47306a" stroke-width="2" stroke-dasharray="1.500 1"/><circle cx="18" cy="14" r="9.500" fill="#fff" stroke="#8a62b8" stroke-width="4.500"/><path d="M18 14V5M18 14l8-3M18 14l5 7M18 14l-5 7M18 14l-8-3" stroke="#8a62b8" stroke-width="2.500"/><circle cx="18" cy="14" r="7" fill="none" stroke="#333" stroke-width=".8" stroke-dasharray="3 2"/><circle cx="18" cy="14" r="2" fill="#fff" stroke="#333"/></svg><strong>SKA-DXFPAR...</strong><span>350 x 350</span></article>
            <article class="card"><p><b>4 | <i>0</i></b></p><svg viewBox="0 0 36 28"><path d="M15 1h2l1 14 6 6-1 6h-1q0-4-5-6l-1-3z" fill="#c6c2b4" stroke="#555" stroke-width=".8"/></svg><strong>SKA-DXFPAR...</strong><span>226.96 x 685</span></article>
            <article class="card"><p><b>4 | <i>0</i></b></p><svg viewBox="0 0 36 28"><path d="M1 9l1-2h16l1 3q8 6 16 12H5z" fill="#f52a58" stroke="#611" stroke-width=".8"/><path d="M6 10h2M12 10h2M8 15h2M7 19h2M15 15h2M16 19h2" stroke="#411" stroke-width="1.500"/></svg><strong>SKA-DXFPAR...</strong><span>470.55 x 219..</span></article>
            <article class="card"><p><b>4 | <i>0</i></b></p><svg viewBox="0 0 36 28"><path d="M17 2q1.500-2 3 0l1 14q3 8 8 11H7q8-4 9-12z" fill="#13bb73" stroke="#164" stroke-width=".8"/></svg><strong>SKA-DXFPAR...</strong><span>440 x 510</span></article>
            <article class="card"><p><b>4 | <i>0</i></b></p><svg viewBox="0 0 36 28"><path d="M9 3l6-2q2 8 7 9l6 3-5 4q-5 1-7 9l-7-3z" fill="#2b56b8" stroke="#123" stroke-width=".8"/></svg><strong>SKA-DXFPAR...</strong><span>258 x 360</span></article>
            <article class="card"><p><b>4 | <i>0</i></b></p><svg viewBox="0 0 36 28"><path d="M21 1h8v6l-2 2v12l1 6h-8v-4l2-2v-9H9v-2h13V8l-1-2z" fill="#a96a44" stroke="#432" stroke-width=".8"/></svg><strong>SKA-DXFPAR...</strong><span>210 x 268.1</span></article>
            <article class="card"><p><b>4 | <i>0</i></b></p><svg viewBox="0 0 36 28"><rect x="1" y="4" width="34" height="21" rx="2" fill="#fd8660" stroke="#733" stroke-width=".8"/><rect x="6" y="7" width="15" height="15" rx="1.500" fill="#fff" stroke="#733" stroke-width=".8"/></svg><strong>SKA-DXFPAR...</strong><span>800 x 470</span></article>
            <article class="card"><p><b>4 | <i>0</i></b></p><svg viewBox="0 0 36 28"><path d="M5 3l2-2h24L5 27z" fill="#37876a" stroke="#243" stroke-width=".8"/></svg><strong>SKA-DXFPAR...</strong><span>285.21 x 285..</span></article>
          </div>
        </section>

        <section class="pane">
          <div class="panelhead"><h2>Lista de peças</h2><svg><use href="#w-down"/></svg><svg><use href="#w-pin"/></svg><svg><use href="#w-x"/></svg></div>
          <div class="listbox">
            <table>
              <colgroup><col class="c1"><col class="c2"><col class="c3"><col class="c4"><col class="c5"><col></colgroup>
              <thead><tr><th>Referência</th><th>Vale</th><th>Quantidade p...</th><th>Quantidade e...</th><th>Dimensões</th><th></th></tr></thead>
              <tbody>
                <tr><td><i class="k0"></i><svg><use href="#r-part"/></svg>SKA-DXFPAR0100</td><td>1</td><td>4</td><td>0</td><td>439 x 414.359</td><td></td></tr>
                <tr><td><i class="k1"></i><svg><use href="#r-part"/></svg>SKA-DXFPAR0101</td><td>2</td><td>4</td><td>0</td><td>301.704 x 186.569</td><td></td></tr>
                <tr><td><i class="k2"></i><svg><use href="#r-part"/></svg>SKA-DXFPAR0102</td><td>3</td><td>4</td><td>0</td><td>339.007 x 466.675</td><td></td></tr>
                <tr><td><i class="k3"></i><svg><use href="#r-part"/></svg>SKA-DXFPAR0103</td><td>6</td><td>4</td><td>0</td><td>182.45 x 218</td><td></td></tr>
                <tr><td><i class="k4"></i><svg><use href="#r-part"/></svg>SKA-DXFPAR0104</td><td>8</td><td>4</td><td>0</td><td>64.755 x 64.755</td><td></td></tr>
                <tr><td><i class="k5"></i><svg><use href="#r-part"/></svg>SKA-DXFPAR0105</td><td>14</td><td>4</td><td>0</td><td>203.333 x 175.257</td><td></td></tr>
                <tr><td><i class="k6"></i><svg><use href="#r-part"/></svg>SKA-DXFPAR0106</td><td>7</td><td>4</td><td>0</td><td>350 x 350</td><td></td></tr>
                <tr><td><i class="k7"></i><svg><use href="#r-part"/></svg>SKA-DXFPAR0107</td><td>11</td><td>4</td><td>0</td><td>226.956 x 685</td><td></td></tr>
                <tr><td><i class="k8"></i><svg><use href="#r-part"/></svg>SKA-DXFPAR0108</td><td>9</td><td>4</td><td>0</td><td>470.547 x 219.542</td><td></td></tr>
                <tr><td><i class="k9"></i><svg><use href="#r-part"/></svg>SKA-DXFPAR0109</td><td>13</td><td>4</td><td>0</td><td>440 x 510</td><td></td></tr>
                <tr><td><i class="k10"></i><svg><use href="#r-part"/></svg>SKA-DXFPAR0110</td><td>12</td><td>4</td><td>0</td><td>258 x 360</td><td></td></tr>
                <tr><td><i class="k11"></i><svg><use href="#r-part"/></svg>SKA-DXFPAR0112</td><td>10</td><td>4</td><td>0</td><td>210 x 268.1</td><td></td></tr>
                <tr><td><i class="k12"></i><svg><use href="#r-part"/></svg>SKA-DXFPAR10</td><td>4</td><td>4</td><td>0</td><td>800 x 470</td><td></td></tr>
                <tr><td><i class="k13"></i><svg><use href="#r-part"/></svg>SKA-DXFPAR11</td><td>5</td><td>4</td><td>0</td><td>285.214 x 285.214</td><td></td></tr>
              </tbody>
            </table>
            <div class="scroll"><span></span></div>
          </div>
        </section>
      </div>
    </section>

    <aside class="props">
      <div class="prophead"><h2>Nesting - Sub-trabalho ativo em chapas seleci...</h2><svg><use href="#w-down"/></svg><svg><use href="#w-pin"/></svg></div>
      <div class="propbar">
        <button aria-label="Reiniciar"><svg viewBox="0 0 18 18"><path d="M14 13a7 7 0 1 1 1-7M15 2v5h-5" fill="none" stroke="#777" stroke-width="1.300"/></svg></button>
        <button aria-label="Sair"><svg viewBox="0 0 18 18"><path d="M9 2H3q-1 0-1 1v12q0 1 1 1h6M6 9h10M12 5l4 4-4 4" fill="none" stroke="#222" stroke-width="1.500"/></svg></button>
      </div>
      <form class="fields">
        <h3>Nesting automático</h3>
        <div class="row spin"><label for="f1">Tempo máximo total</label><input id="f1" value="1200 s" disabled><svg viewBox="0 0 6 10"><path d="M1 4l2-3 2 3zM1 6l2 3 2-3z" fill="#888"/></svg></div>
        <div class="row spin"><label for="f2">Tempo máximo de melhoria</label><input id="f2" value="120 s" disabled><svg viewBox="0 0 6 10"><path d="M1 4l2-3 2 3zM1 6l2 3 2-3z" fill="#888"/></svg></div>
        <div class="check"><input type="checkbox" id="f3" checked disabled><label for="f3">Rotações livres</label></div>
        <h3>Estado do nesting</h3>
        <div class="row"><label for="f4">Eficiência</label><input id="f4" value="72,0 %" readonly></div>
        <div class="row"><label for="f5">Número de peças</label><input id="f5" value="43" readonly></div>
        <div class="row"><label for="f6">Número de chapas</label><input id="f6" value="1" readonly></div>
        <div class="row"><label for="f7">Cota X máxima</label><input id="f7" value="3000,000" readonly></div>
        <h3>Progresso</h3>
        <p class="msg">Pesquisando o melhor nesting -</p>
        <div class="bar"><span></span></div>
        <div class="row wide"><label for="f8">Tempo total</label><input id="f8" value="00:01:23.00" readonly></div>
        <div class="row wide"><label for="f9">Tempo de melhoria</label><input id="f9" value="00:01:01.00" readonly></div>
        <button type="button" class="stop">Parar</button>
      </form>
    </aside>
  </main>

  <footer class="status"><span>X: -50.362</span><span>Y: 497.105</span></footer>
</div>
</body>
</html>
```
FILE: styles.css
```css
* { box-sizing: border-box; }
html, body { margin: 0; height: 100%; background: #fff; }
body { font-family: "Open Sans", "Noto Sans", sans-serif; font-size: 6px; line-height: 8px; color: #333; }
h1, h2, h3, p { margin: 0; font-weight: 400; }
button, input { font: inherit; color: inherit; border: 0; background: none; padding: 0; margin: 0; }
svg { display: block; flex: none; }
.defs { position: absolute; width: 0; height: 0; }

.app { height: 100vh; display: flex; flex-direction: column; border-radius: 31px; overflow: hidden; background: #eeeff1; }

.titlebar { background: #004e92; color: #fff; height: 18px; display: grid; grid-template-columns: 1fr auto 1fr; align-items: center; border-top: 1px solid #003b70; }
.titlebar h1 { font-size: 6px; }
.quick { display: flex; align-items: center; gap: 3px; padding-left: 17px; }
.quick button svg { width: 10px; height: 10px; }
.tiny { width: 6px; height: 6px; color: #fff; }
.winbtns { display: flex; justify-content: flex-end; gap: 17px; padding-right: 8px; }
.winbtns svg { width: 8px; height: 8px; }
.white { color: #fff; }

.tabs { background: #004e92; color: #fff; display: flex; height: 13px; align-items: stretch; }
.tabs button { padding: 0 8px; }
.tabs button:first-child { padding: 0 9px 0 5px; }
.tabs .active { background: #f3f3f3; color: #17599a; }
.tabs .ctx { background: #075da6; border-right: 1px solid #004e92; }
.tabs .options { margin-left: auto; padding: 0 2px; }
.tabs .help { background: #1aa7e2; border-radius: 50%; width: 10px; height: 10px; padding: 0; margin-right: 2px; font-weight: 700; }

.ribbon { display: flex; background: #f0f0f0; height: 53px; padding-top: 2px; border-bottom: 1px solid #44448c; }
.group { display: flex; flex-direction: column; align-items: center; border-right: 1px solid #dcdcdc; padding-bottom: 3px; }
.tools { flex: 1; display: grid; }
.t-chapas { grid-template-columns: 27px 24px 32px 34px; padding-left: 2px; }
.t-nesting { grid-template-columns: 27px 37px 27px 22px 27px 22px 14px; }
.t-transf { grid-template-columns: 27px 23px 29px 31px; padding-left: 2px; }
.t-ret { grid-template-columns: 29px 22px 14px 42px; }
.t-rev { grid-template-columns: 35px 31px 30px 14px; }
.t-one { grid-template-columns: 32px; padding: 0 2px; }
.t-mac { grid-template-columns: 29px; }
.tool { display: block; line-height: 7px; color: #444; padding-top: 2px; text-align: center; align-self: start; }
.tool svg { width: 20px; height: 20px; margin: 0 auto 2px; }
.tool.pressed { background: #c3c3c3; align-self: stretch; display: flex; flex-direction: column; align-items: center; justify-content: flex-start; }
.tool.off { color: #aaa; }
.caption { color: #555; line-height: 8px; }
.small { display: grid; grid-template-columns: 10px; grid-auto-rows: 10px; gap: 3px; padding: 2px 2px 0; align-content: start; }
.small svg { width: 10px; height: 10px; }
.small.two { grid-template-columns: 10px 10px; }
.t-chapas .small.two { grid-template-columns: 10px 10px 5px; column-gap: 2px; }
.t-chapas .small svg:nth-child(3), .t-chapas .small svg:nth-child(6) { grid-column-start: 1; }
.small .caret { width: 5px; align-self: center; }
.small.three { grid-template-columns: 10px 10px 10px; }
.ruled { border-left: 1px solid #dcdcdc; }

.work { flex: 1; min-height: 0; display: grid; grid-template-columns: 126px minmax(0, 1fr) 200px; column-gap: 2px; background: #f3f4f7; }
.panelhead { display: flex; align-items: center; gap: 1px; height: 13px; padding: 0 3px; background: #f5f6f8; color: #333; }
.panelhead h2 { flex: 1; font-size: 8px; color: #1b5f9e; white-space: nowrap; }
.panelhead svg { width: 8px; height: 8px; }
.explorer { display: flex; flex-direction: column; border-right: 1px solid #b9bcc2; min-height: 0; min-width: 0; }
.explorer .panelhead { padding-right: 1px; }
.tree { flex: 1; background: #fff; border-top: 1px solid #d5d8dc; padding-left: 7px; }
.node { display: flex; align-items: center; height: 9px; gap: 2px; white-space: nowrap; color: #111; }
.node b { font-family: Roboto, "Open Sans", sans-serif; }
.child { padding-left: 15px; }
.exp { width: 14px; height: 7px; }
.nico { width: 9px; height: 7px; }
.sidetabs { display: flex; height: 12px; }
.sidetabs button { flex: 1; border: 1px solid #ccc; border-top: 0; background: #e6e7e9; white-space: nowrap; }
.sidetabs .on { background: #fff; color: #1b6fb4; border: 0; border-bottom: 2px solid #0c66ae; }

.center { display: flex; flex-direction: column; min-height: 0; min-width: 0; }
.canvas { flex: 1; min-height: 0; background: linear-gradient(#1a1a70, #101050 45%, #000018 95%); }
.canvas svg { width: 100%; height: 100%; }
.parts { stroke: #d3cc80; stroke-width: 4; stroke-linejoin: round; }
.hole { fill: #b7b8ad; }
.cyan { fill: #00b7ff; }
.green { fill: #00bf72; }
.red { fill: #ff2c60; }
.blue { fill: #2956b4; }
.orange { fill: #ff8660; }
.teal { fill: #3d8a70; }
.slit { stroke: #b4cf9b; stroke-width: 8; }
.stone { fill: #b6aca0; }
.brown { fill: #ac6a46; }
.tan { fill: #c9b884; }
.pink { fill: #fc70e6; }
.jigline { fill: none; stroke: #ddcf58; stroke-width: 3; }
.bolt { fill: #e6c67a; stroke-width: 2; }
.dots { fill: #e594a8; stroke-width: 2; }
.wye-edge { fill: none; stroke: #eec36b; stroke-width: 27; }
.wye-body { fill: none; stroke: #c2386a; stroke-width: 21; }
.wye-slot { fill: none; stroke: #d6b292; stroke-width: 9; stroke-linecap: round; }

.bottom { display: grid; grid-template-columns: 345fr 346fr; column-gap: 3px; height: 152px; margin-top: 3px; }
.pane { display: flex; flex-direction: column; min-height: 0; min-width: 0; }
.pane .panelhead { height: 15px; padding-bottom: 1px; }
.cards { flex: 1; background: #fff; border: 1px solid #b9bcc2; display: flex; flex-wrap: wrap; align-content: flex-start; padding: 1px; }
.card { width: 41px; height: 57px; border: 1px solid #d2d2d2; border-left: 0; background: #e9e9e9; display: flex; flex-direction: column; text-align: center; white-space: nowrap; line-height: 8px; color: #222; }
.card p { text-align: left; padding-left: 1px; line-height: 9px; color: #000; }
.card p i { font-style: normal; color: #2b35b8; }
.card > svg { width: 100%; height: 30px; background: #fff; padding: 1px; }
.card .hole { fill: #fff; }
.card svg.cyan { stroke: #245; stroke-width: 6; }
.card strong { font-weight: 400; color: #000; }

.listbox { flex: 1; min-height: 0; overflow: hidden; background: #fff; border: 1px solid #b9bcc2; display: flex; }
table { flex: 1; width: 100%; table-layout: fixed; border-collapse: collapse; align-self: flex-start; color: #111; }
.c1 { width: 86px; } .c2 { width: 43px; } .c3 { width: 51px; } .c4 { width: 50px; } .c5 { width: 77px; }
th { font-weight: 400; text-align: left; height: 12px; padding: 0 0 0 3px; border-right: 1px solid #eee; white-space: nowrap; }
td { height: 9px; padding: 0 0 0 3px; line-height: 9px; white-space: nowrap; }
td:first-child { display: flex; align-items: center; gap: 1px; padding-left: 2px; }
td i { width: 4px; height: 8px; }
td svg { width: 8px; height: 8px; }
.k0 { background: #14aef0; } .k1 { background: #f2a3ad; } .k2 { background: #f06ee0; } .k3 { background: #cbb083; } .k4 { background: #f0bb36; }
.k5 { background: #b83a6c; } .k6 { background: #8a62ab; } .k7 { background: #b0aaa2; } .k8 { background: #e9275a; } .k9 { background: #18b071; }
.k10 { background: #2450a4; } .k11 { background: #a3623f; } .k12 { background: #f08a64; } .k13 { background: #2f7f62; }
.scroll { width: 9px; background: #f5f5f5; display: flex; justify-content: center; padding: 8px 0 17px; }
.scroll span { width: 1px; background: #777; }

.props { background: #fcfcfc; border-left: 1px solid #dfe1e5; color: #222; min-width: 0; }
.prophead { background: #0c5496; color: #fff; height: 13px; display: flex; align-items: center; gap: 1px; padding: 0 2px; }
.prophead h2 { flex: 1; font-size: 8px; white-space: nowrap; }
.prophead svg { width: 8px; height: 8px; }
.propbar { background: #f0f0f0; height: 45px; display: flex; gap: 6px; padding: 8px 4px; align-items: flex-start; }
.propbar svg { width: 18px; height: 18px; }
.fields { padding: 1px 6px 0 8px; display: flex; flex-direction: column; }
.fields h3 { font-size: 6px; height: 16px; line-height: 16px; margin-left: -3px; }
.fields h3::before { content: "◢"; font-size: 5px; margin-right: 4px; color: #111; }
.row { display: grid; grid-template-columns: 1fr 112px; align-items: center; height: 13px; padding-left: 2px; }
.row input { text-align: right; width: 100%; height: 11px; background: #f1f1f1; border-bottom: 1px solid #999; padding-right: 1px; }
.row.wide { grid-template-columns: 1fr 123px; }
.row.spin { grid-template-columns: 1fr 84px 12px; }
.spin input { border: 0; color: #888; }
.spin svg { width: 12px; height: 11px; background: #f1f1f1; }
.check { display: flex; align-items: center; gap: 3px; height: 13px; color: #666; }
.check input { width: 7px; height: 7px; }
.check + h3, .row + h3 { margin-top: 4px; }
.msg { padding-left: 2px; line-height: 15px; }
.bar { height: 9px; border: 1px solid #bbb; background: #e4e4e4; display: flex; margin-bottom: 1px; }
.bar span { width: 6%; background: #078007; }
.stop { width: 59px; height: 12px; border: 1px solid #aaa; background: #fff; margin-top: 1px; }

.status { height: 12px; display: flex; justify-content: flex-end; gap: 25px; padding-right: 42px; line-height: 10px; border-bottom: 1px solid #0c4a86; background: #eeeff1; }
```
